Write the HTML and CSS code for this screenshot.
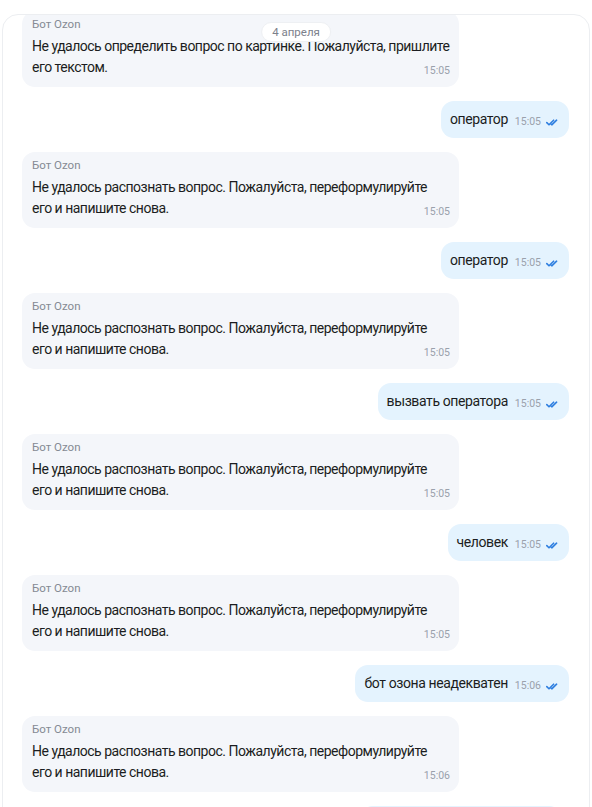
FILE: index.html
```html
<!DOCTYPE html>
<html lang="ru">
<head>
<meta charset="utf-8">
<link rel="stylesheet" href="styles.css">
</head>
<body>
<div class="chat">
  <div class="date">4 апреля</div>
  <div class="feed">
    <div class="msg bot first">
      <div class="name">Бот Ozon</div>
      <p class="text">Не удалось определить вопрос по картинке. Пожалуйста, пришлите<br>его текстом.<span class="time">15:05</span></p>
    </div>
    <div class="msg me"><span class="mtext">оператор</span><span class="time">15:05</span><svg class="check" viewBox="0 0 12 7" width="12" height="7"><path d="M0.8 3.6 L3 5.8 L7.6 1.2 M5.2 5.2 L5.8 5.8 L10.6 1.2" fill="none" stroke="#2f7fe0" stroke-width="1.6" stroke-linecap="round" stroke-linejoin="round"/></svg></div>
    <div class="msg bot">
      <div class="name">Бот Ozon</div>
      <p class="text">Не удалось распознать вопрос. Пожалуйста, переформулируйте<br>его и напишите снова.<span class="time">15:05</span></p>
    </div>
    <div class="msg me"><span class="mtext">оператор</span><span class="time">15:05</span><svg class="check" viewBox="0 0 12 7" width="12" height="7"><path d="M0.8 3.6 L3 5.8 L7.6 1.2 M5.2 5.2 L5.8 5.8 L10.6 1.2" fill="none" stroke="#2f7fe0" stroke-width="1.6" stroke-linecap="round" stroke-linejoin="round"/></svg></div>
    <div class="msg bot">
      <div class="name">Бот Ozon</div>
      <p class="text">Не удалось распознать вопрос. Пожалуйста, переформулируйте<br>его и напишите снова.<span class="time">15:05</span></p>
    </div>
    <div class="msg me"><span class="mtext">вызвать оператора</span><span class="time">15:05</span><svg class="check" viewBox="0 0 12 7" width="12" height="7"><path d="M0.8 3.6 L3 5.8 L7.6 1.2 M5.2 5.2 L5.8 5.8 L10.6 1.2" fill="none" stroke="#2f7fe0" stroke-width="1.6" stroke-linecap="round" stroke-linejoin="round"/></svg></div>
    <div class="msg bot">
      <div class="name">Бот Ozon</div>
      <p class="text">Не удалось распознать вопрос. Пожалуйста, переформулируйте<br>его и напишите снова.<span class="time">15:05</span></p>
    </div>
    <div class="msg me"><span class="mtext">человек</span><span class="time">15:05</span><svg class="check" viewBox="0 0 12 7" width="12" height="7"><path d="M0.8 3.6 L3 5.8 L7.6 1.2 M5.2 5.2 L5.8 5.8 L10.6 1.2" fill="none" stroke="#2f7fe0" stroke-width="1.6" stroke-linecap="round" stroke-linejoin="round"/></svg></div>
    <div class="msg bot">
      <div class="name">Бот Ozon</div>
      <p class="text">Не удалось распознать вопрос. Пожалуйста, переформулируйте<br>его и напишите снова.<span class="time">15:05</span></p>
    </div>
    <div class="msg me"><span class="mtext">бот озона неадекватен</span><span class="time">15:06</span><svg class="check" viewBox="0 0 12 7" width="12" height="7"><path d="M0.8 3.6 L3 5.8 L7.6 1.2 M5.2 5.2 L5.8 5.8 L10.6 1.2" fill="none" stroke="#2f7fe0" stroke-width="1.6" stroke-linecap="round" stroke-linejoin="round"/></svg></div>
    <div class="msg bot">
      <div class="name">Бот Ozon</div>
      <p class="text">Не удалось распознать вопрос. Пожалуйста, переформулируйте<br>его и напишите снова.<span class="time">15:06</span></p>
    </div>
    <div class="msg me next"></div>
  </div>
</div>
</body>
</html>
```

FILE: styles.css
```css
html, body {
  margin: 0;
  padding: 0;
  background: #ffffff;
  overflow: hidden;
  height: 807px;
}
body {
  font-family: Roboto, "Noto Sans", sans-serif;
  color: #1b1d21;
}
.chat {
  position: relative;
  margin: 14px 2px 0 2px;
  height: 830px;
  border: 1px solid #eceef1;
  border-radius: 16px;
  overflow: hidden;
}
.date {
  position: absolute;
  top: 7px;
  left: 50%;
  transform: translateX(-50%);
  background: #ffffff;
  border: 1px solid #eef0f3;
  border-radius: 10px;
  padding: 0 10px;
  height: 18px;
  line-height: 18px;
  font-size: 11.5px;
  color: #7c818b;
  z-index: 2;
}
.feed {
  display: flex;
  flex-direction: column;
  gap: 14px;
  padding: 0 20px 0 19px;
}
.msg {
  box-sizing: border-box;
  border-radius: 13px;
}
.bot {
  align-self: flex-start;
  width: 437px;
  background: #f4f6fa;
  padding: 5px 9px 9px 10px;
  height: 76px;
}
.first {
  margin-top: -4px;
}
.name {
  font-size: 11.5px;
  line-height: 16px;
  color: #858a93;
  margin-bottom: 4px;
}
.text {
  margin: 0;
  font-size: 14px;
  letter-spacing: -0.5px;
  line-height: 21px;
  white-space: nowrap;
  color: #1b1d21;
}
.text .time {
  float: right;
  margin-top: 3px;
  line-height: 21px;
  letter-spacing: 0;
}
.time {
  font-size: 10.5px;
  color: #9aa1ac;
}
.me {
  align-self: flex-end;
  height: 37px;
  background: #e4f3fe;
  padding: 0 11px 0 9px;
  display: flex;
  align-items: center;
}
.next {
  width: 202px;
  margin-right: 7px;
}
.mtext {
  font-size: 14px;
  letter-spacing: -0.4px;
  line-height: 21px;
  margin-top: -1px;
}
.me .time {
  margin-left: 7px;
  margin-top: 3px;
}
.check {
  margin-left: 5px;
  margin-top: 5px;
}
```
